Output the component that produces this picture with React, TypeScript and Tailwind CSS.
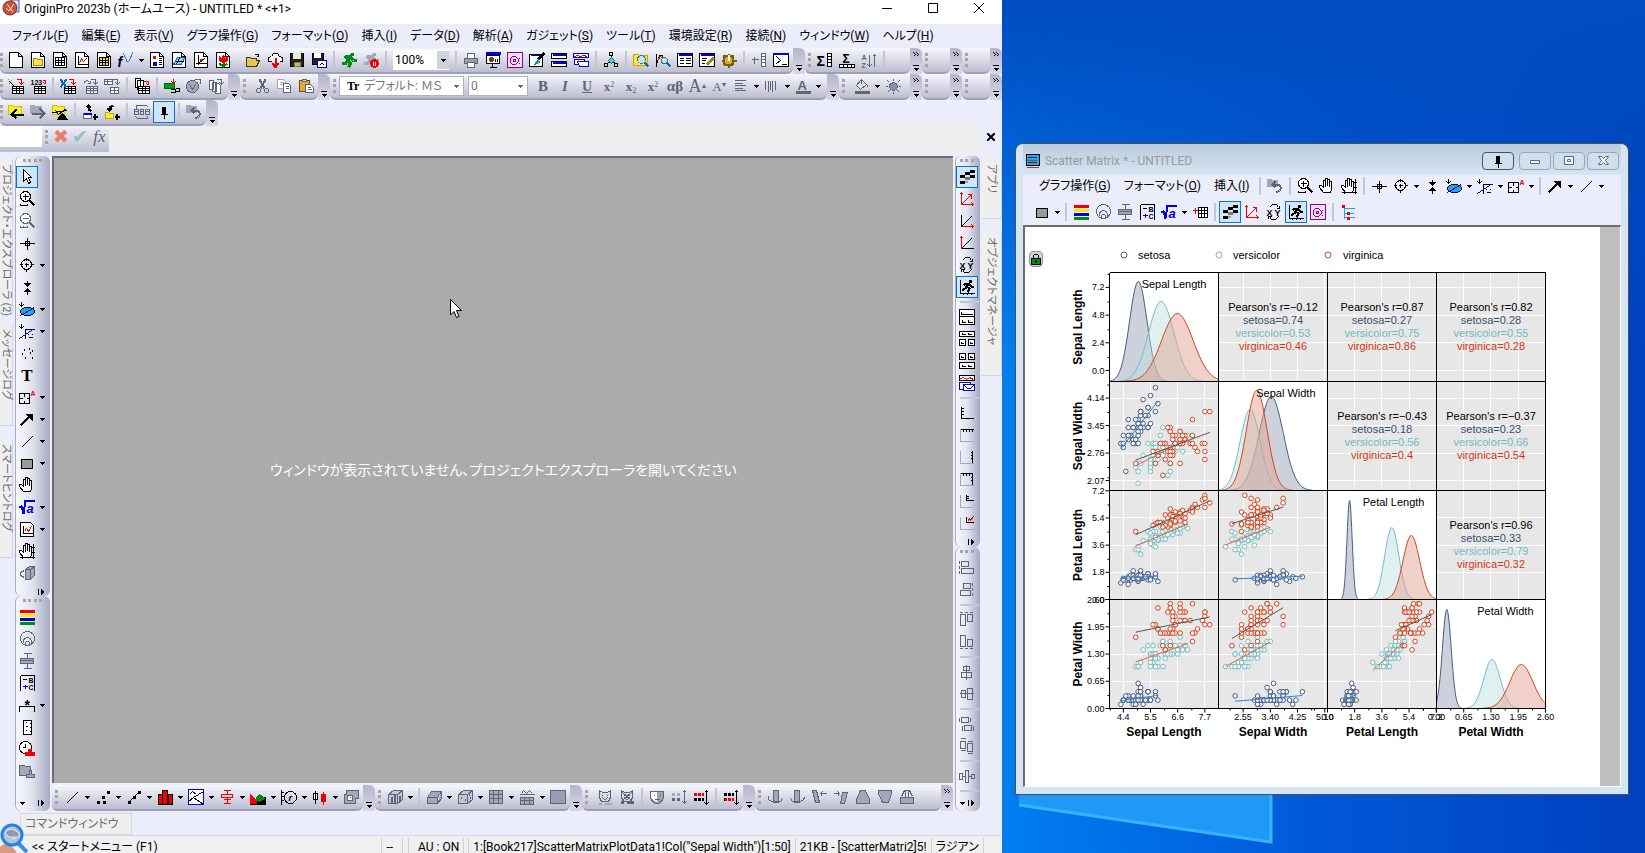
import type { ReactNode } from 'react'
import clsx from 'clsx'

const K = '#000'
const W = '#fff'
const R = '#f00000'
const B = '#0000e0'
const G = '#5f6578'
const L = '#a3a7b8'
const Y = '#ffe34a'

const p = (d: string, stroke = K, fill = 'none', width = 1) => (
  <path key={d + stroke} d={d} stroke={stroke} fill={fill} strokeWidth={width} />
)

const t = (x: number, y: number, text: string, size = 8, fill = K, style = '') => (
  <text key={text + x + y} x={x} y={y} fontSize={size} fill={fill} fontWeight="bold" fontStyle={style} fontFamily="Liberation Sans, sans-serif">
    {text}
  </text>
)

const o = (cx: number, cy: number, r: number, stroke = K, fill = 'none', width = 1) => (
  <circle key={`${cx}-${cy}-${r}`} cx={cx} cy={cy} r={r} stroke={stroke} fill={fill} strokeWidth={width} />
)

const page = p('M1 0H10L14 4V15H1ZM10 0V4H14', K, W)
const smallGrid = (c = K, f = W) => p('M4 8H15V15H4ZM4 10H15M4 12H15M8 8V15M11 8V15', c, f)
const redHook = p('M8 1H13V5M11 4L13 6L15 4', R)
const grayHook = p('M8 1H13V5M11 4L13 6L15 4', G)
const cube = [p('M1 5L6 1H15V10L10 14H1Z', G, '#c3c6d4'), p('M1 5H10V14M10 5L15 1', G)]
const hand = p('M4 14L0 9V7H2L4 9V2H6V8V0H8V7V1H10V8V3H12V11L11 14Z', K, W)
const runner = (c: string) => [
  o(11, 2, 1, c, c, 2),
  p('M9 4L6 8L9 11L7 15M6 8L4 11H0M9 4L5 4L3 6M9 5L12 8H15', c, 'none', 3),
]
const mask = (c = G) => [p('M2 1L5 3H10L13 1V8L11 12H4L2 8Z', c, '#d5d7e2'), p('M5 5V6M10 5V6M5 8L7 10H8L10 8', c)]
const dots = (c: string) => [
  p('M0 5H3M4 5H7M8 5H10', c, 'none', 3),
  p('M0 10H3M4 10H7M8 10H10', K, 'none', 3),
  p('M13 1V15M11 3L13 1L15 3M11 13L13 15L15 13'),
]
const smallAxis = p('M1 1V14H14', L)

const icons: Record<string, ReactNode> = {
  newPage: page,
  newFolder: [page, p('M3 6H6L7 7H12V13H3Z', '#a08800', Y)],
  sheet: [page, p('M3 5H12V13H3ZM3 8H12M3 10H12M6 5V13M9 5V13')],
  graph: [page, p('M4 3V12H13'), p('M5 11L7 6L9 9L12 6', R)],
  matrix: [page, p('M3 5H12V13H3ZM3 8H12M3 10H12M6 5V13M9 5V13', K, '#ffe800')],
  func: [t(-1, 14, 'f', 14, K, 'italic'), p('M5 1L8 8Q9 11 11 8L14 0', '#2a8cd8')],
  report: [page, p('M4 4H6V6H4Z', R, R), p('M4 10H7V13H4Z', B, B), p('M9 6H12M9 8H12M9 10H12M9 12H12')],
  image3d: [page, p('M2 12L6 5H13L10 12Z', '#0868b8', '#7fd4ff'), p('M4 9H12M8 5L5 12')],
  axisPage: [page, p('M5 2V12M2 11H14M5 11L12 5'), p('M7 8L9 7', R, R, 2)],
  tulip: [page, p('M4 4L6 6L8 3L10 6L12 4V8L9 10H7L4 8Z', R, R), p('M8 10V14M4 11L8 14L12 11', '#008000', 'none', 2)],
  openFolder: [p('M1 5H5L6 6H11V8L14 8L11 14H1Z', '#4a3800', '#e8c45a'), p('M9 2H13V4M12 4L14 3')],
  cloud: [p('M4 9H1V5L4 4L6 1H10L12 4L15 5V9H12', K, W), p('M8 5V14M5 11L8 15L11 11', R, 'none', 2)],
  save: [p('M1 1H14V14H1Z', K, '#222'), p('M4 1H11V6H4Z', '#e8e8d0', '#e8e8d0'), p('M5 10H11V14H5Z', '#8a7a40', '#c8b870')],
  saveGraph: [p('M1 1H12V12H1Z', K, '#222'), p('M3 1H9V5H3Z', W, W), p('M6 8H15V15H6Z', B, W), p('M8 13L10 11L13 12')],
  runner: runner('#008a18'),
  runnerPause: [runner(L), o(11, 11, 4, R, R), p('M10 9V13M12 9V13', W)],
  print: [p('M4 1H11V6H4Z', G, W), p('M1 6H14V11H1Z', G, '#9a9eaa'), p('M4 10H11V15H4Z', G, W)],
  present: [p('M0 1H15', B, 'none', 3), p('M1 3H14V11H1Z', K, W), o(6, 7, 2, '#008000', R), p('M10 6V9M12 6V9', B), p('M7 11V14M4 15H11')],
  polar: [p('M0 0H15V15H0Z', '#7a0a80', '#ffd8fa'), p('M5 4H8L11 7V9L8 12H5L3 10V6ZM6 7H8V9H6ZM12 5V6M12 10V11', '#7a0a80')],
  brush: [p('M0 2H13V14H0Z', K, W), p('M1 3H12', B), p('M15 0L9 7', K, K, 3), p('M9 7L5 12L10 10Z', '#0890a0', '#28c8d8')],
  windows: [p('M0 1H15V6H0ZM0 9H15V14H0Z', K, W), p('M1 2H14M1 10H14', B, B, 2)],
  layers: [p('M0 1H15V5H0Z', B, W), p('M1 4L4 3L7 4L10 3L14 4', R), p('M1 7H11V12H1Z', B, W), p('M4 9H15V14H6Z', B, W)],
  hierarchy: [p('M6 0H9V3H6ZM1 11H4V14H1ZM11 11H14V14H11Z', K, Y), p('M8 3V9M8 9L3 11M8 9L12 11'), p('M8 5L11 8L8 11L5 8Z', '#087080', '#50d0e0')],
  findFolder: [p('M0 2H5L6 3H14V13H0Z', '#c8a800', Y), o(8, 7, 4, G, '#b8e8ff'), p('M11 10L15 14', '#0868b8', K, 2)],
  findPlot: [p('M1 1V14M1 12L4 3L7 3L9 12'), p('M2 8L5 4L8 6', R), o(9, 8, 3, G, '#b8e8ff'), p('M11 10L15 14', '#0868b8', K, 2)],
  tableBlue: [p('M0 1H15V14H0Z', K, W), p('M1 2H14', B, B, 2), p('M2 6H6M8 6H13M2 8H6M8 8H13M2 11H6M8 11H13')],
  editNote: [p('M0 1H15V14H0Z', K, W), p('M1 2H14', B, B, 2), p('M2 6H7M2 8H6M2 11H5'), p('M14 5L8 12', '#a08800', Y, 3), p('M7 13L8 12', R)],
  gear: [o(7, 8, 5, '#7a6000', '#d8b030', 2), p('M7 1V4M7 12V15M0 8H3M11 8H15M2 3L4 5M12 3L10 5M2 13L4 11M12 13L10 11', '#7a6000', K, 2), p('M7 2V8', W, W, 2)],
  addCol: [p('M0 7H7M3 4V11', G), p('M10 1H14V14H10ZM10 4H14M10 7H14M10 10H14', G, W)],
  console: [p('M0 1H15V14H0Z', K, W), p('M0 1H15', B, B, 2), p('M3 4L7 8L3 11M8 12H13')],
  sumCol: [t(-1, 13, 'Σ', 14), p('M10 1H14V14H10ZM10 4H14M10 7H14M10 10H14', K, W)],
  sumRow: [t(3, 10, 'Σ', 12), p('M0 12H15V15H0ZM4 12V15M8 12V15M12 12V15', K, W)],
  sortAz: [t(0, 7, 'A', 7, G), t(0, 15, 'Z', 7, G), p('M8 2V14M6 12L8 14L10 12M13 2V14M11 4L13 2L15 4', G)],
  wizard: [smallGrid(), redHook, p('M1 3L7 9'), p('M0 1L1 2M3 1V2M1 5H0', '#c0a000')],
  num123: [t(0, 6, '123', 7), smallGrid(), p('M12 2H15V5M13 4L15 6', R)],
  importX: [smallGrid(), redHook, p('M0 1L6 9M6 1L0 9', '#0868b8', K, 2)],
  importRe: [p('M1 5Q4 0 7 4M5 5H8V2', G), smallGrid(G, '#e8e9f0'), grayHook],
  importSplit: [p('M0 1H8V6H0ZM0 3H8M3 1V6', G, W), p('M6 9H14V15H6ZM6 12H14M10 9V15', G, W), grayHook],
  stack: [p('M1 0H6V9H1ZM3 2H9V11H3Z', K, W), smallGrid(), p('M9 3H14V6M12 5L14 7', R)],
  connect: [p('M0 5H10V10H0Z', '#006800', '#009a20'), p('M9 0V4M7 3L9 5L11 3', R), p('M6 11H11V14H6M11 10H15V13H11', K)],
  clock: [o(6, 8, 6, G, L), p('M3 6L6 11L9 6M8 1H14V5', G)],
  pages: [p('M1 2H5V11H1ZM4 4H8V13H4ZM7 5H10L12 7V15H7Z', G, W), grayHook],
  cut: [p('M5 1L10 10M11 1L6 10', G, 'none', 2), o(4, 12, 2, G), o(12, 12, 2, G)],
  copy: [p('M1 1H7L9 3V10H1ZM3 4H7M3 6H7', L, W), p('M7 5H12L14 7V14H7ZM9 8H12M9 10H12', G, W)],
  paste: [p('M1 2H11V13H1Z', '#6a4a10', '#e0a840'), p('M4 1H8V3H4Z', G, '#ddd'), p('M7 6H12L15 9V14H7ZM9 9H12M9 11H13', G, W)],
  align: p('M1 2H12M1 5H9M1 7H12M1 10H9M1 12H12', G),
  tally: p('M1 2V11M4 2V13M6 2V11M8 2V13M11 2V11', G),
  fontColor: [t(2, 11, 'A', 13, G), p('M0 14H15', '#666', K, 3)],
  bucket: [p('M7 1L12 6L6 11L2 7ZM7 1V5M12 6L14 9', G, '#dfe1ea'), p('M0 14H15', '#666', K, 3)],
  sun: [o(8, 8, 4, G, '#8a8fa5'), p('M8 0V2M8 13V15M0 8H2M13 8H15M2 2L4 4M14 2L12 4M2 14L4 12M14 14L12 12', G)],
  folderBack: [p('M0 1H4L5 2H13V10H0Z', '#d8c000', '#ffee30'), p('M15 10H4M8 5L3 10L8 14', K, 'none', 2)],
  folderFwd: [p('M0 1H4L5 2H11V9H0Z', L, L), p('M1 9H14M9 4L14 9L9 14', G, 'none', 2)],
  folderUp: [p('M0 1H4L5 2H12V10H0Z', '#d8c000', '#ffee30'), p('M0 8L15 6M3 6L6 10L14 4'), p('M10 9L5 15H15Z', K, K)],
  moveUp: [p('M1 9H9V14H1Z', G, W), p('M1 9H9', B, B, 2), p('M9 7L6 5V1M4 3L6 1L8 3', K, K, 2), p('M10 12H15M12 9V15', K, K, 2)],
  folderAdd: [p('M1 8H4L5 9H9V14H1Z', '#c8a800', '#ffee30'), p('M5 6L5 3L9 1M3 4L5 6L7 4', K, K, 2), p('M10 12H15M12 9V15', K, K, 2)],
  arrange: p('M0 5H4V10H0ZM6 5H9V10H6ZM11 5H15V10H11ZM2 4V1H12L14 3M13 11V14H3L1 12M0 7H4M6 7H9M11 7H15', G),
  pin: [p('M6 3H9V9H6Z', K, K), p('M4 10H11M8 10V14')],
  undo: [p('M0 1H4L5 2H10V8H0Z', L, L), p('M6 6H11Q15 9 12 12L9 14M8 3L5 6L8 9', G, 'none', 2)],
  pointer: p('M4 0V12L7 9L9 14L11 13L9 8H12Z', K, W),
  zoomIn: [o(6, 5, 5, K, W), p('M3 5H9M6 2V8M1 14H8M1 12V14M8 12V14'), p('M10 9L15 14', K, K, 2)],
  zoomOut: [o(6, 5, 5, G, W), p('M3 5H9M1 14H8M1 12V14M4 12V14M8 12V14', G), p('M10 9L15 14', G, K, 2)],
  cross: p('M0 8H15M8 2V14M6 6H10V10H6Z'),
  target: [o(7, 7, 5), p('M7 0V3M7 11V14M0 7H3M11 7H14M5 7H9M7 5V9')],
  pinch: [p('M8 1V6M8 15V10'), p('M5 4H11L8 7ZM5 12H11L8 9Z', K, K)],
  ellipse: [<ellipse key="e" cx="8" cy="10" rx="7" ry="4" stroke={K} fill="#20a8e8" />, p('M2 0V4M0 3L2 5L4 3'), p('M1 14L15 6', B)],
  maskData: [p('M2 0V4M0 3L2 5L4 3M6 5V15M6 6H15M9 10V11M13 10V11M9 14H13'), p('M0 15L15 5', B)],
  points: p('M4 4H5M9 3H10M2 8H3M10 7H11M5 12H6M12 12H13M12 5H13', K, 'none', 2),
  region: [p('M0 4H10V14H0ZM5 4V7M5 11V14M0 9H3M7 9H10'), t(11, 6, 'A', 7, R)],
  arrow: [p('M1 14L12 3', K, K, 2), p('M7 3H13V9Z', K, K)],
  line: p('M2 14L13 3'),
  rect: p('M2 4H13V13H2Z', K, '#9a9a9a'),
  hand,
  handAxis: [hand, p('M0 14H15M14 0V15M12 4H15M12 9H15M3 12V15')],
  sqrt: [p('M0 8L2 7L4 14L6 1H15', B, 'none', 2), t(7, 13, 'a', 13, B, 'italic')],
  graphMini: [p('M1 1H11L14 4V15H1Z', K, W), p('M4 4V12H13'), p('M5 10L7 7L9 10L12 5', R)],
  cubeTool: [p('M6 4L10 1H15V10L11 14H6Z', G, L), p('M6 4H11V14M11 4L15 1M5 5L1 7V10L5 12', G)],
  colors: [p('M0 2H15', R, R, 3), p('M0 6H15', '#ffe800', R, 3), p('M0 10H15', B, R, 3), p('M0 14H15', '#008a18', R, 3)],
  rings: [o(8, 7, 7, G), o(8, 10, 4, G), o(8, 12, 2, G)],
  box: [p('M4 0H12M8 0V5M8 10V15M4 15H12', G), p('M1 5H14V10H1ZM1 7H14', G, L)],
  legend: [p('M1 0H15V15M1 0V15', K), p('M3 4H7'), p('M3 11H8M6 9V13', B), t(9, 7, 'B', 7), t(9, 14, 'C', 7)],
  bracket: [t(5, 12, '*', 14), p('M0 14V9H15V14')],
  ruler: p('M4 1H12V15H4ZM6 3H7M10 4H11M6 7H8M10 8H11M6 11H7M10 12H11', K, W),
  stamp: [o(6, 6, 6, K, W), p('M6 2V6M3 6H6'), p('M9 8H12V11H15V14H6V11H9Z', R, R)],
  stampGray: [p('M0 2H5L6 3H11V12H0Z', G, L), p('M10 7H12V11H15V14H7V11H10Z', G, L)],
  steps: [p('M10 2H15', K, K, 3), p('M5 4H10', K, K, 3), p('M0 7H5', K, K, 3), p('M10 7H15', K, K, 3), p('M5 9H10', '#777', K, 3), p('M0 13H5', K, K, 3), p('M5 12H8', '#999', K, 2)],
  axis3: [p('M2 1V13H14M0 3L2 1L4 3M12 11L14 13L12 15M2 13L12 3M8 3H12V7', R)],
  axisX: [p('M2 1V13L12 3'), p('M2 13H14M12 11L14 13L12 15', R)],
  axisY: [p('M2 13H14M2 13L12 3'), p('M2 13V1M0 3L2 1L4 3', R)],
  swapXY: [t(0, 11, 'X', 9), t(8, 11, 'Y', 9), p('M3 3L6 0H10L12 3M13 1V4H10M12 12L9 15H5L3 12M2 14V12H5')],
  runGraph: [p('M1 0V14H15M0 3H1M0 7H1M0 11H1M4 15V14M8 15V14M12 15V14'), o(11, 2, 1, K, K), p('M10 4L7 7L10 9L8 13M9 4H6L4 6M10 5L12 7H14M7 8L3 11', K, 'none', 2)],
  panelA: p('M0 0H15V15H0ZM0 7H15M2 2V5H13M3 10V13H6M9 10V13H13', K, W),
  panelB: p('M0 0H15V5H0ZM0 8H6V14H0ZM9 8H15V14H9ZM3 1V3H6M9 1V3H12M2 10V12H4M11 10V12H13', K, W),
  panelC: p('M0 0H6V6H0ZM9 0H15V6H9ZM0 9H15V15H0ZM2 2V4H4M11 2V4H13M3 11V13H6M9 11V13H12', K, W),
  panelD: [p('M0 0H15V5H0Z', K, W), p('M1 3L4 2L7 4L10 2L14 4', R), p('M0 7H11V14H0Z', B, W), p('M4 9H15V15H4Z', B, W), p('M5 10L8 13H11L14 10')],
  axisBL: p('M2 1V13H14M2 3H4M2 6H4M2 9H4M5 13V12M8 13V12M11 13V12'),
  axisTL: [smallAxis, p('M1 2H14V1M4 2V4M7 2V4M10 2V4M13 2V4')],
  axisR: [smallAxis, p('M13 1V13M11 3H13M11 6H13M11 9H13')],
  axisBox: [smallAxis, p('M1 2H13V13M4 2V4M7 2V4M10 2V4M11 6H13M11 9H13')],
  axisIn: [smallAxis, p('M7 1V7H14M7 3H9M7 5H9M10 6V7')],
  axisInRed: [smallAxis, p('M7 1V7H14'), p('M8 6L10 3L11 5L14 1', R)],
  alL: p('M0 0V3M0 5V8M0 10V13M2 1H9V6H2ZM2 8H14V13H2Z', G),
  alR: p('M13 0V3M13 5V8M13 10V13M4 1H11V6H4ZM1 8H11V13H1Z', G),
  alT: p('M0 0H3M5 0H8M10 0H13M1 2H6V13H1ZM8 2H13V9H8Z', G),
  alB: p('M0 14H3M5 14H8M10 14H13M1 1H6V12H1ZM8 5H13V12H8Z', G),
  alCv: p('M7 0V15M4 2H10V6H4ZM2 8H12V13H2Z', G),
  alCh: p('M0 7H14M2 4H6V11H2ZM8 2H13V13H8Z', G),
  sameW: p('M0 1V5M2 1H9V6H2ZM11 1V5M3 9V14M5 9H12V14H5ZM14 9V14', G),
  sameH: p('M1 0H6M1 3H6V10H1ZM1 12H6M8 3H13M8 5H13V13H8ZM8 15H13', G),
  distr: p('M0 5H3V11H0ZM6 2H9V14H6ZM12 6H15V10H12ZM3 8H6M9 8H12', G),
  scatter: p('M1 13H4M6 8H9M7 13H10M11 3H14', K, K, 3),
  lineSym: [p('M2 13L12 3'), p('M1 13H4M6 8H9M11 3H14', K, K, 3)],
  bars: [p('M1 5H5V15H1ZM11 5H15V15H11Z', K, R), p('M5 1H10V15H5Z', K, R)],
  lineBox: [p('M0 0H15V15H0Z', B, W), p('M0 12L5 8L15 15M5 8L15 2'), p('M1 5L4 2L8 5', B)],
  boxRed: p('M4 1H11M8 1V5M2 5H13V8H2ZM4 10H11M8 8V14M4 14H11', R),
  area: [p('M0 5L7 12L15 8V15H0Z', K, K), p('M0 5L6 12V14H0Z', R, R), p('M5 10L9 5L14 9L9 12Z', '#008a18', '#008a18')],
  polarR: [p('M0 0V15M0 3H2M0 7H2M0 11H2'), o(9, 8, 6), t(7, 11, 'r', 9, K, 'italic')],
  candle: [p('M3 1V14M1 4H5V10H1Z', K, W), p('M11 2V15M9 5H13V12H9Z', R, R)],
  maskStack: [p('M3 1H15V9H12V14H1V5H3Z', G, L), p('M4 6H9V11H4ZM6 8H7', G, W)],
  cubeBars: [cube, p('M4 14V7M7 14V4M12 11V6', G, 'none', 2)],
  cubeFlat: [p('M1 8L5 2H15L11 8V14H1ZM1 8H11M15 2V9L11 14', G, L)],
  cubeDots: [cube, p('M3 8H4M7 10H8M11 5H12M12 8H13', G, 'none', 2)],
  gridMap: p('M1 1H14V14H1ZM1 5H14M1 9H14M5 1V14M10 1V14', G, L, 1),
  waveMap: [p('M0 5H15M2 4L4 1L7 4L10 1L13 4', G), p('M1 8H14V15H1ZM1 11H14M5 8V15M10 8V15', G, L)],
  square: p('M0 1H15V14H0Z', G, '#9b9eb0'),
  faceA: [mask(), p('M1 14H4M7 14H14', L, K, 2)],
  faceB: [mask(), p('M1 13H4M7 13H14', G, K, 3), p('M2 2L13 12M13 2L2 12', G)],
  faceC: [p('M1 2H14V9L10 14H5L1 9Z', G, '#9fa3b5'), p('M2 3H7V12L2 8Z', W, W), p('M4 6H5M10 6H11M5 10H10', G)],
  dotsGray: [p('M0 5H3M5 5H8', L, K, 3), p('M0 10H3M5 10H8', G, K, 3), p('M13 1V14M11 3L13 1L15 3M11 12L13 14L15 12', G)],
  dotsRed: dots(R),
  dotsRow: [dots(K), p('M1 10H3M4 10H7M8 10H10', R, 'none', 3)],
  rotL: [p('M6 1H11V13H6Z', G, L), p('M1 7Q0 11 5 12H13L15 9', G)],
  rotR: [p('M5 1H10V13H5Z', G, L), p('M15 7Q15 11 10 12H3L1 9', G)],
  skewL: [p('M1 1H5L8 13H4Z', G, L), p('M9 4H15M11 2L9 4L11 7', G)],
  skewR: [p('M9 3H14L11 14H7Z', G, L), p('M0 4H6M4 2L6 4L4 7', G)],
  widen: p('M5 1H10L14 10V14H1V10Z', G, L),
  narrow: p('M1 1H14V4L11 13H5L1 4Z', G, L),
  lift: [p('M1 8H14V14H1Z', G, L), p('M2 7L5 1H10L13 7M6 1V7M9 1V7', G, '#e2e4ec')],
  plusGrid: [p('M0 6H5M3 3V9', R), p('M6 3H15V13H6ZM6 6H15M6 9H15M9 3V13M12 3V13', K, W)],
  tree: [p('M4 3V14M4 4H14M4 9H13M4 13H14', '#18a8d8'), p('M1 2H4M6 9H9M6 14H9', R, R, 3)],
}

// icons that are really just type
const glyphs: Record<string, ReactNode> = {
  bold: <b className="font-serif text-[15px]">B</b>,
  italic: <b className="font-serif text-[15px] italic">I</b>,
  underline: <b className="font-serif text-[14px] underline">U</b>,
  sup: <span className="font-serif text-[13px] font-bold">x<sup className="text-[8px] font-normal">2</sup></span>,
  sub: <span className="font-serif text-[13px] font-bold">x<sub className="text-[8px] font-normal">2</sub></span>,
  supsub: <span className="font-serif text-[13px] font-bold">x<sup className="text-[8px] font-normal">2</sup></span>,
  greek: <span className="font-serif text-[15px] font-bold">αβ</span>,
  bigger: <span className="font-serif text-[18px]">A<sup className="text-[8px]">▴</sup></span>,
  smaller: <span className="font-serif text-[13px]">A<sup className="text-[8px]">▾</sup></span>,
  text: <b className="font-serif text-[17px] text-black">T</b>,
}

function Icon({ name }: { name: string }) {
  if (glyphs[name]) return <span className="whitespace-nowrap leading-none text-[#5f6578]">{glyphs[name]}</span>
  return (
    <svg viewBox="-0.5 -0.5 16 16" className="size-4 shrink-0" shapeRendering="crispEdges">
      {icons[name]}
    </svg>
  )
}

function Caret({ gray = false }: { gray?: boolean }) {
  return (
    <svg viewBox="0 0 5 3" className="h-[3px] w-[5px] shrink-0" shapeRendering="crispEdges">
      <path d="M0 0H5L2.5 3Z" fill={gray ? G : K} />
    </svg>
  )
}

// "name" = button, "name:v" = with drop arrow, "name!" = pressed, "|" = separator, "_" = gap
function Items({ spec, vertical = false }: { spec: string; vertical?: boolean }) {
  return (
    <>
      {spec.split(' ').map((token, i) => {
        if (token === '_') return <span key={i} className="w-2 shrink-0" />
        if (token === '|') {
          return vertical ? (
            <span key={i} className="my-[3px] ml-1 h-[2px] w-[19px] shrink-0 bg-[#c3c5d0]" />
          ) : (
            <span key={i} className="mx-[3px] h-[18px] w-[2px] shrink-0 bg-[#c3c5d0]" />
          )
        }
        const name = token.replace(/:v|!/, '')
        const pressed = token.endsWith('!')
        return (
          <span key={i} className="flex shrink-0 items-center">
            <button
              aria-label={name}
              aria-pressed={pressed}
              className={clsx(
                'flex size-[22px] items-center justify-center border',
                pressed ? 'border-[#0078d7] bg-[#d3e5f5]' : 'border-transparent',
              )}
            >
              <Icon name={name} />
            </button>
            {token.endsWith(':v') && (
              <button aria-label={`${name} options`} className="flex h-[22px] w-[9px] items-center justify-center">
                <Caret />
              </button>
            )}
          </span>
        )
      })}
    </>
  )
}

function Grip({ vertical = false }: { vertical?: boolean }) {
  return vertical ? (
    <span className="mx-auto mt-[3px] mb-1 block w-6 max-w-[60%] border-t-3 border-dotted border-[#a5a5a8]" />
  ) : (
    <span className="mx-[3px] h-[14px] shrink-0 border-l-3 border-dotted border-[#a5a5a8]" />
  )
}

function Cap({ more = false }: { more?: boolean }) {
  return (
    <button
      aria-label="Toolbar options"
      className="flex h-full w-[12px] shrink-0 flex-col items-center justify-end gap-2 rounded-tr-md bg-linear-to-b from-[#b4b5ca] to-[#d7d8e6] pb-[3px]"
    >
      {more && (
        <svg viewBox="-0.5 -0.5 6 5" className="h-[5px] w-[6px]" shapeRendering="crispEdges">
          <path d="M0 0L2 2L0 4M3 0L5 2L3 4" fill="none" stroke={K} />
        </svg>
      )}
      <svg viewBox="0 0 6 6" className="size-[6px]" shapeRendering="crispEdges">
        <path d="M0 0H6V1H0ZM0 3H6L3 6Z" fill={K} />
      </svg>
    </button>
  )
}

function Group({ children, first = false, more = false, className = '' }: { children?: ReactNode; first?: boolean; more?: boolean; className?: string }) {
  return (
    <div className={clsx('flex h-[26px] shrink-0 items-center', className)}>
      <div className="flex h-full flex-1 items-center rounded-b-md border-b-2 border-[#9fa0b8] bg-linear-to-b from-[#f6f7fd] to-[#bcbed0] pr-px">
        {first ? <span className="h-[14px] w-[5px] border-l-3 border-dotted border-[#a5a5a8]" /> : <Grip />}
        {children}
      </div>
      <Cap more={more} />
    </div>
  )
}

const mainMenu = [
  ['ファイル', 'F'], ['編集', 'E'], ['表示', 'V'], ['グラフ操作', 'G'], ['フォーマット', 'O'], ['挿入', 'I'], ['データ', 'D'],
  ['解析', 'A'], ['ガジェット', 'S'], ['ツール', 'T'], ['環境設定', 'R'], ['接続', 'N'], ['ウィンドウ', 'W'], ['ヘルプ', 'H'],
]

function MenuItems({ items }: { items: string[][] }) {
  return (
    <>
      {items.map(([label, key]) => (
        <button key={label} className="shrink-0 whitespace-nowrap">
          {label}(<u>{key}</u>)
        </button>
      ))}
    </>
  )
}

function SideTab({ label, className }: { label: string; className: string }) {
  return (
    <button
      className={clsx(
        'flex w-full shrink-0 items-center whitespace-nowrap border-r border-b border-[#d0d3e0] bg-[#efefef] pt-1 text-[11px] leading-[13px] text-[#6d6d6d] [text-orientation:sideways] [writing-mode:vertical-rl]',
        className,
      )}
    >
      {label}
    </button>
  )
}

function VBar({ children, className = '', flip = false }: { children: ReactNode; className?: string; flip?: boolean }) {
  return (
    <div className={clsx('flex flex-col rounded-md border-x border-[#a9abc3] bg-linear-to-r from-[#f7f8fe] via-[#e0e2ee] to-[#abadc6]', className)}>
      <Grip vertical />
      {children}
      <button aria-label="Toolbar options" className="mt-auto flex h-4 shrink-0 items-center justify-between px-1">
        {flip ? <Caret /> : <span />}
        <svg viewBox="0 0 7 6" className="h-[6px] w-[7px]" shapeRendering="crispEdges">
          <path d="M0 0H1V6H0ZM3 0L6 3L3 6Z" fill={K} />
        </svg>
      </button>
    </div>
  )
}

const select = 'appearance-none border border-[#b0b2bf] bg-white px-2 outline-none'

function OriginWindow() {
  return (
    <section className="absolute inset-y-0 left-0 flex w-[60.9%] flex-col overflow-hidden bg-[#ebedfb]">
      <header className="flex h-6 shrink-0 items-start bg-white text-[12px] leading-[18px]">
        <svg viewBox="0 0 18 16" className="ml-[2px] h-4 w-[18px]">
          <path d="M9 0H17V12H9Z" fill="#dcebff" stroke="#3a62a8" />
          <circle cx="8" cy="8" r="7" fill="#c8543c" stroke="#7c2c20" />
          <path d="M4 8L7 11L12 4M5 4L11 12" stroke="#ffe2d8" fill="none" />
        </svg>
        <h1 className="ml-1 grow">OriginPro 2023b (ホームユース) - UNTITLED * &lt;+1&gt;</h1>
        {['M0 5.5H10', 'M.5 .5H9.5V9.5H.5Z', 'M0 0L10 10M10 0L0 10'].map((d, i) => (
          <button key={d} aria-label={['Minimize', 'Maximize', 'Close'][i]} className="flex h-4 w-[46px] items-center justify-center">
            <svg viewBox="0 0 10 10" className="size-[10px]"><path d={d} stroke={K} fill="none" /></svg>
          </button>
        ))}
      </header>

      <nav className="flex h-6 shrink-0 items-center gap-[13px] pl-3 text-[12px]">
        <MenuItems items={mainMenu} />
      </nav>

      <div className="flex h-[26px] shrink-0 items-center">
        <Group first>
          <Items spec="newPage newFolder sheet graph matrix func:v report image3d axisPage tulip _ openFolder cloud save saveGraph | runner runnerPause |" />
          <span className="relative mx-[3px] flex items-center">
            <select aria-label="Zoom" defaultValue="100%" className="h-5 w-14 appearance-none bg-white px-[2px] text-[12px] leading-4 outline-none">
              <option>100%</option>
            </select>
            <span className="pointer-events-none absolute right-0 flex h-[18px] w-3 items-center justify-center bg-[#d0d2df]"><Caret /></span>
          </span>
          <Items spec="| print present polar brush windows layers | hierarchy | findFolder findPlot tableBlue editNote gear | addCol console" />
        </Group>
        <Group more className="flex-1"><Items spec="sumCol sumRow sortAz |" /></Group>
        <Group more className="w-10" />
        <Group more className="w-10" />
      </div>

      <div className="flex h-[26px] shrink-0 items-center">
        <Group first>
          <Items spec="wizard num123 | importX importRe importSplit | stack | connect clock pages" />
        </Group>
        <Group><span className="w-[2px]" /><Items spec="cut copy paste" /></Group>
        <Group>
          <span className="relative mr-1 flex items-center">
            <select aria-label="Font" disabled className={clsx(select, 'h-5 w-[125px] pl-6 text-[12px] leading-4 text-[#777]')}>
              <option>デフォルト: ＭＳ</option>
            </select>
            <b className="pointer-events-none absolute left-2 font-serif text-[12px]">Tr</b>
            <span className="pointer-events-none absolute right-[5px] flex"><Caret gray /></span>
          </span>
          <span className="relative mr-1 flex items-center">
            <select aria-label="Font size" disabled className={clsx(select, 'h-5 w-[60px] pl-[2px] text-[12px] leading-4 text-[#777]')}>
              <option>0</option>
            </select>
            <span className="pointer-events-none absolute right-[5px] flex"><Caret gray /></span>
          </span>
          <Items spec="bold italic underline sup sub supsub greek bigger smaller align:v tally:v fontColor:v" />
          <span className="w-[3px]" />
        </Group>
        <Group more className="flex-1"><span className="w-[3px]" /><Items spec="bucket:v sun" /></Group>
        <Group more className="w-10" />
        <Group more className="w-10" />
      </div>

      <div className="flex h-[26px] shrink-0 items-center">
        <Group first>
          <Items spec="folderBack folderFwd folderUp | moveUp folderAdd | arrange pin! | undo" />
        </Group>
      </div>

      <div className="flex h-[26px] shrink-0">
        <div className="flex w-[109px] items-center bg-linear-to-b from-[#f0f1f9] to-[#bcbed0] pb-[5px]">
          <input aria-label="Cell" className="h-full w-[42px] bg-white outline-none" />
          <Grip />
          {[['✖', 'Cancel', 'text-[#e5806c]'], ['✔', 'Accept', 'text-[#8fbfc0]']].map(([mark, label, tone]) => (
            <button key={label} aria-label={label} className={clsx('w-5 text-[19px] leading-none', tone)}>{mark}</button>
          ))}
          <button aria-label="Insert function" className="w-5 font-serif text-[17px] leading-none italic text-[#5f6578]">fx</button>
        </div>
        <div className="flex-1 bg-[#efefef]" />
        <button aria-label="Close formula bar" className="flex h-[21px] w-[22px] items-center justify-center">
          <svg viewBox="0 0 8 8" className="size-2"><path d="M0 0L8 8M8 0L0 8" stroke={K} strokeWidth="2" /></svg>
        </button>
      </div>

      <div className="flex min-h-0 flex-1 gap-[2px] pt-1">
        <div className="flex w-[13px] shrink-0 flex-col gap-[14px] pt-1">
          <SideTab label="プロジェクト・エクスプローラ (2)" className="h-[151px]" />
          <SideTab label="メッセージログ" className="h-[101px]" />
          <SideTab label="スマートヒントログ" className="h-[118px]" />
        </div>
        <div className="flex w-[35px] shrink-0 flex-col">
          <VBar className="h-[440px]">
            <Items vertical spec="pointer! zoomIn zoomOut cross target:v pinch ellipse:v maskData:v points text region:v arrow:v line:v rect:v hand sqrt:v graphMini:v handAxis cubeTool" />
          </VBar>
          <VBar flip className="flex-1">
            <Items vertical spec="colors rings box legend bracket:v ruler stamp stampGray" />
          </VBar>
        </div>
        <div className="flex min-w-0 flex-1 flex-col">
          <main className="flex min-h-0 flex-1 items-center justify-center border-t-2 border-l-2 border-[#6d6d6d] bg-[#ababab] text-[14px] text-white">
            ウィンドウが表示されていません、プロジェクトエクスプローラを開いてください
          </main>
          <div className="flex shrink-0 pt-[2px]">
            <Group>
              <Items spec="line:v scatter:v lineSym:v bars:v lineBox:v boxRed:v area:v polarR:v candle:v maskStack" />
            </Group>
            <Group><Items spec="cubeBars:v | cubeFlat:v cubeDots:v gridMap:v waveMap:v square" /></Group>
            <Group><span className="w-[3px]" /><Items spec="faceA faceB | faceC dotsGray dotsRed | dotsRow" /></Group>
            <Group more className="flex-1"><Items spec="rotL rotR skewL skewR widen narrow lift" /></Group>
          </div>
        </div>
        <div className="flex w-[25px] shrink-0 flex-col">
          <VBar className="h-[391px]">
            <Items vertical spec="steps! axis3 axisX axisY swapXY runGraph! | panelA panelB panelC panelD | axisBL axisTL axisR axisBox axisIn axisInRed" />
          </VBar>
          <VBar flip className="flex-1">
            <Items vertical spec="alL alR | alT alB | alCv alCh | sameW sameH | distr |" />
          </VBar>
        </div>
        <div className="flex w-5 shrink-0 flex-col gap-[14px] pt-1">
          <SideTab label="アプリ" className="h-[59px]" />
          <SideTab label="オブジェクトマネージャ" className="h-[143px]" />
        </div>
      </div>

      <div className="flex h-6 shrink-0 items-end pl-5">
        <button className="h-[22px] w-[112px] border border-[#d5d7e2] bg-[#efefef] pl-1 text-left text-[12px] leading-5 text-[#6d6d6d]">コマンドウィンドウ</button>
      </div>
      <footer className="relative flex h-[18px] shrink-0 items-center border-t border-[#d5d7e2] bg-[#f0f0f0] pt-1 text-[12px] whitespace-nowrap">
        <svg viewBox="0 0 28 30" className="absolute bottom-0 left-0 h-[30px] w-7">
          <path d="M0 24Q8 16 17 30H0Z" fill="#d99b80" />
          <path d="M18 20L27 29" stroke="#3c8ede" strokeWidth="4" />
          <circle cx="12" cy="12" r="10" fill="#b6c3d2" stroke="#2484e4" strokeWidth="3" />
          <path d="M5 10Q8 5 14 7L19 10V14H9ZM12 16L16 15" fill="#8c9aad" stroke="#dfe7ef" />
        </svg>
        <button className="min-w-0 flex-1 pl-8 text-left">&lt;&lt; スタートメニュー (F1)</button>
        <span className="border-l border-[#cfd1dc] px-1">--</span>
        <span className="mx-[5px] border-x border-[#cfd1dc] px-px">&nbsp;</span>
        <span className="border-r border-[#cfd1dc] px-1">AU : ON</span>
        <span className="ml-1 border-l border-[#cfd1dc] px-1">1:[Book217]ScatterMatrixPlotData1!Col("Sepal Width")[1:50]</span>
        <span className="border-l border-[#cfd1dc] px-1">21KB - [ScatterMatri2]5!</span>
        <span className="border-x border-[#cfd1dc] px-1">ラジアン</span>
        <span className="w-[18px]" />
      </footer>
      <svg viewBox="0 0 12 20" className="absolute top-[299px] left-[450px] h-5 w-3">
        <path d="M.5 .5V16L4 12.5L6.500 18.500L9 17.500L6.500 11.500H11.500Z" fill={W} stroke={K} />
      </svg>
    </section>
  )
}

// iris measurements in tenths: sepal length, sepal width, petal length, petal width
const species = [
  {
    name: 'setosa', color: '#4a5c82', text: '#33506f', line: '#2088e0', fill: '#9aa3b8',
    rows: '51351402 49301402 47321302 46311502 50361402 54391704 46341403 50341502 44291402 49311501 54371502 48341602 48301401 43301101 58401202 57441504 54391304 51351403 57381703 51381503 54341702 51371504 46361002 51331705 48341902 50301602 50341604 52351502 52341402 47321602 48311602 54341504 52411501 55421402 49311502 50321202 55351302 49361401 44301302 51341502 50351303 45231303 44321302 50351606 51381904 48301403 51381602 46321402 53371502 50331402',
  },
  {
    name: 'versicolor', color: '#74bdc0', text: '#6dbcbd', line: '#e0603c', fill: '#b8dde0',
    rows: '70324714 64324515 69314915 55234013 65284615 57284513 63334716 49243310 66294613 52273914 50203510 59304215 60224010 61294714 56293613 67314414 56304515 58274110 62224515 56253911 59324818 61284013 63254915 61284712 64294313 66304414 68284814 67305017 60294515 57263510 55243811 55243710 58273912 60275116 54304515 60344516 67314715 63234413 56304113 55254013 55264412 61304614 58264012 50233310 56274213 57304212 57294213 62294313 51253011 57284113',
  },
  {
    name: 'virginica', color: '#d5451c', text: '#d03a10', line: '#555555', fill: '#e0a493',
    rows: '63336025 58275119 71305921 63295618 65305822 76306621 49254517 73296318 67255818 72366125 65325120 64275319 68305521 57255020 58285124 64325323 65305518 77386722 77266923 60225015 69325723 56284920 77286720 63274918 67335721 72326018 62284818 61304918 64285621 72305816 74286119 79386420 64285622 63285115 61265614 77306123 63345624 64315518 60304818 69315421 67315624 69315123 58275119 68325923 67335725 67305223 63255019 65305220 62345423 59305118',
  },
].map((s) => ({ ...s, rows: s.rows.split(' ').map((r) => [0, 2, 4, 6].map((i) => Number(r.slice(i, i + 2)) / 10)) }))

const CELL = 109
const LEFT = 84.5
const TOP = 45.5

// off / scale give pixel = (value - off) * scale inside a cell
const vars = [
  { name: 'Sepal Length', off: 3.84, scale: 24.7, ticks: [4.4, 5.5, 6.6, 7.7], digits: 1, peaks: [100, 80, 68] },
  { name: 'Sepal Width', off: 1.78, scale: 32, ticks: [2.55, 3.4, 4.25, 5.1], digits: 2, peaks: [94, 81, 100] },
  { name: 'Petal Length', off: 0, scale: 15.1, ticks: [0, 1.8, 3.6, 5.4, 7.2], digits: 1, peaks: [99, 72, 64] },
  { name: 'Petal Width', off: 0, scale: 41.9, ticks: [0, 0.65, 1.3, 1.95, 2.6], digits: 2, peaks: [99, 49, 44] },
]
const yVars = [
  { off: -0.95, scale: 11.55, ticks: [0, 2.4, 4.8, 7.2], digits: 1 },
  { off: 1.82, scale: 39.85, ticks: [2.07, 2.76, 3.45, 4.14], digits: 2 },
  { off: 0, scale: 15.1, ticks: [0, 1.8, 3.6, 5.4, 7.2], digits: 1 },
  { off: 0, scale: 41.9, ticks: [0, 0.65, 1.3, 1.95, 2.6], digits: 2 },
]

const pearson: Record<string, string[]> = {
  '0-1': ['−0.12', '0.74', '0.53', '0.46'],
  '0-2': ['0.87', '0.27', '0.75', '0.86'],
  '0-3': ['0.82', '0.28', '0.55', '0.28'],
  '1-2': ['−0.43', '0.18', '0.56', '0.4'],
  '1-3': ['−0.37', '0.23', '0.66', '0.54'],
  '2-3': ['0.96', '0.33', '0.79', '0.32'],
}

const mean = (a: number[]) => a.reduce((x, y) => x + y, 0) / a.length

function bell(values: number[], v: (typeof vars)[number], peak: number) {
  const m = mean(values)
  const sd = Math.sqrt(values.reduce((s, x) => s + (x - m) ** 2, 0) / (values.length - 1))
  let d = ''
  for (let z = -3.4; z <= 3.41; z += 0.1) {
    const x = (m + z * sd - v.off) * v.scale
    const y = CELL - peak * Math.exp((-z * z) / 2)
    d += `${d ? 'L' : 'M'}${x.toFixed(1)} ${y.toFixed(1)}`
  }
  return d
}

function Cell({ row, col }: { row: number; col: number }) {
  const vx = vars[col]
  const vy = yVars[row]
  const x = (n: number) => (n - vx.off) * vx.scale
  const y = (n: number) => CELL - (n - vy.off) * vy.scale
  const values = pearson[`${row}-${col}`]

  return (
    <svg x={LEFT + col * CELL} y={TOP + row * CELL} width={CELL} height={CELL}>
      <rect width={CELL} height={CELL} fill={row === col ? W : '#e7e7e7'} />
      {row !== col && vx.ticks.map((n) => <path key={n} d={`M${Math.round(x(n))} 0V${CELL}`} stroke={W} />)}
      {row !== col && vy.ticks.map((n) => <path key={n} d={`M0 ${Math.round(y(n))}H${CELL}`} stroke={W} />)}

      {row === col && species.map((s, i) => {
        const d = bell(s.rows.map((r) => r[row]), vx, vx.peaks[i])
        return (
          <g key={s.name}>
            <path d={d + 'Z'} fill={s.fill} fillOpacity={i === 1 ? 0.45 : 0.5} />
            <path d={d} fill="none" stroke={s.color} />
          </g>
        )
      })}
      {row === col && <text x={CELL - 12} y="15" textAnchor="end" fontSize="11">{vx.name}</text>}

      {row > col && species.map((s) => s.rows.map((r, i) => (
        <circle key={s.name + i} cx={x(r[col])} cy={y(r[row])} r="2.300" fill={W} fillOpacity="0.8" stroke={s.color} />
      )))}
      {row > col && species.map((s) => {
        const xs = s.rows.map((r) => r[col])
        const ys = s.rows.map((r) => r[row])
        const [mx, my] = [mean(xs), mean(ys)]
        const slope = xs.reduce((a, n, i) => a + (n - mx) * (ys[i] - my), 0) / xs.reduce((a, n) => a + (n - mx) ** 2, 0)
        const [a, b] = [Math.min(...xs), Math.max(...xs)]
        return <line key={s.name} x1={x(a)} y1={y(my + slope * (a - mx))} x2={x(b)} y2={y(my + slope * (b - mx))} stroke={s.line} />
      })}

      {values && (
        <g textAnchor="middle" fontSize="11">
          <text x={CELL / 2} y="38">Pearson's r={values[0]}</text>
          {species.map((s, i) => (
            <text key={s.name} x={CELL / 2} y={51 + i * 13} fill={s.text}>{s.name}={values[i + 1]}</text>
          ))}
        </g>
      )}
    </svg>
  )
}

function ScatterMatrix() {
  const idx = [0, 1, 2, 3]
  const end = CELL * 4
  return (
    <svg viewBox="0 0 574 558" className="h-[558px] w-[574px] shrink-0 font-['Liberation_Sans',sans-serif]">
      {species.map((s, i) => (
        <g key={s.name}>
          <circle cx={[99, 194, 303][i]} cy="28" r="3" fill="none" stroke={s.color} strokeWidth="1" />
          <text x={[113, 208, 318][i]} y="32" fontSize="11">{s.name}</text>
        </g>
      ))}
      {idx.map((r) => idx.map((c) => <Cell key={`${r}${c}`} row={r} col={c} />))}
      {[0, 1, 2, 3, 4].map((i) => (
        <path key={i} d={`M${LEFT} ${TOP + i * CELL}h${end}M${LEFT + i * CELL} ${TOP}v${end}`} stroke={K} shapeRendering="crispEdges" />
      ))}
      {idx.map((i) => {
        const cx = LEFT + i * CELL
        const base = TOP + (i + 1) * CELL
        return (
          <g key={i} fontSize="9">
            {yVars[i].ticks.map((n) => {
              const y = base - (n - yVars[i].off) * yVars[i].scale
              return (
                <g key={n}>
                  <path d={`M${LEFT - 4} ${y}h4M${LEFT - 2} ${y - 13}h2`} stroke={K} />
                  <text x={LEFT - 5} y={y + 3} textAnchor="end">{n.toFixed(yVars[i].digits)}</text>
                </g>
              )
            })}
            {vars[i].ticks.map((n) => {
              const x = cx + (n - vars[i].off) * vars[i].scale
              return (
                <g key={n}>
                  <path d={`M${x} ${TOP + end}v4M${x - 13} ${TOP + end}v2`} stroke={K} />
                  <text x={x} y={TOP + end + 11} textAnchor="middle">{n.toFixed(vars[i].digits)}</text>
                </g>
              )
            })}
            <text x={cx + CELL / 2} y="509" textAnchor="middle" fontSize="12" fontWeight="bold">{vars[i].name}</text>
            <text transform={`translate(57 ${base - CELL / 2}) rotate(-90)`} textAnchor="middle" fontSize="12" fontWeight="bold">{vars[i].name}</text>
          </g>
        )
      })}
    </svg>
  )
}

function GraphWindow() {
  return (
    <section className="absolute top-[143px] right-[16px] bottom-[58px] left-[61.7%] flex flex-col rounded-t-lg border border-[#4c5056] bg-[#d6e5f3] px-[7px] pb-[7px]">
      <header className="flex h-[31px] shrink-0 items-center bg-linear-to-b from-[#bccbdb] to-[#d6e5f3] pt-[2px] text-[12px] text-[#9a9a9a]">
        <svg viewBox="0 0 16 16" className="mr-1 ml-[2px] size-4" shapeRendering="crispEdges">
          <path d="M1 1H14V12H1Z" fill="#28a8e8" stroke={K} />
          <path d="M3 4H12M3 9H12" stroke="#083048" />
          <path d="M3 7H12M2 14H14" stroke="#c83020" />
        </svg>
        <h2 className="grow">Scatter Matrix * - UNTITLED</h2>
        <button aria-label="Pin" className="mr-[5px] flex h-[18px] w-8 items-center justify-center rounded-sm border border-[#485460] bg-[#cfdfee]">
          <Icon name="pin" />
        </button>
        {['M3 7H12V10H3Z', 'M3 3H12V11H3ZM6 6H9V8H6Z', 'M3 3L6 3L8 5L10 3H13L10 7L13 11H10L8 9L6 11H3L6 7Z'].map((d, i) => (
          <button key={d} aria-label={['Minimize', 'Restore', 'Close'][i]} className="mr-[2px] flex h-[18px] w-8 items-center justify-center rounded-sm border border-[#9aa8b6] bg-[#cfdfee]">
            <svg viewBox="-0.5 -0.5 16 16" className="size-4"><path d={d} fill="#f4f8fc" stroke="#5c6670" /></svg>
          </button>
        ))}
      </header>
      <nav className="flex h-[22px] shrink-0 items-center overflow-hidden bg-[#ebedfb] text-[12px]">
        <span className="flex gap-[13px] pr-[7px] pl-4">
          <MenuItems items={[['グラフ操作', 'G'], ['フォーマット', 'O'], ['挿入', 'I']]} />
        </span>
        <Items spec="| undo | zoomIn hand handAxis | cross target:v pinch ellipse:v maskData:v region:v | arrow:v line:v" />
      </nav>
      <div className="flex h-7 shrink-0 items-center bg-[#ebedfb] pt-[2px] pl-2">
        <Items spec="rect:v | colors rings box legend sqrt:v plusGrid | steps! axis3 swapXY runGraph! polar | tree" />
      </div>
      <div className="relative flex min-h-0 flex-1 justify-between overflow-hidden border-t-2 border-l-2 border-r border-b border-t-[#6d6d6d] border-l-[#6d6d6d] border-r-white border-b-white bg-white">
        <ScatterMatrix />
        <div className="w-5 shrink-0 bg-[#c0bfbe]" />
        <button aria-label="Recalculate lock" className="absolute top-6 left-1 flex h-4 w-[14px] items-center justify-center rounded-sm border border-[#8c92a8] bg-[#cfd3e0]">
          <svg viewBox="-0.5 -0.5 10 12" className="h-3 w-[10px]" shapeRendering="crispEdges">
            <path d="M2 5V2L3 1H6L7 2V5" fill="none" stroke={K} />
            <path d="M0 5H9V11H0Z" fill="#009010" stroke={K} />
            <path d="M3 6L6 8L3 10Z" fill={K} />
          </svg>
        </button>
      </div>
    </section>
  )
}

export default function App() {
  return (
    <div className="relative h-screen w-full overflow-hidden bg-linear-to-r from-[#0080f0] from-60% via-[#0058d8] via-80% to-[#0040be] text-black font-['Roboto','Noto_Sans_CJK_JP',sans-serif] [font-feature-settings:'palt'] [&_.font-serif]:font-['Liberation_Serif',serif]">
      <div className="absolute inset-x-0 top-0 h-[360px] bg-linear-to-b from-[#004cc0] to-transparent" />
      <svg viewBox="0 0 644 70" preserveAspectRatio="xMinYMax slice" className="absolute bottom-0 left-[60.9%] h-[70px] w-[644px]">
        <path d="M17 0H270V59L17 22Z" fill="#2098f8" />
        <path d="M269 0V59L17 22" fill="none" stroke="#35b4ff" strokeWidth="3" />
      </svg>
      <OriginWindow />
      <GraphWindow />
    </div>
  )
}
